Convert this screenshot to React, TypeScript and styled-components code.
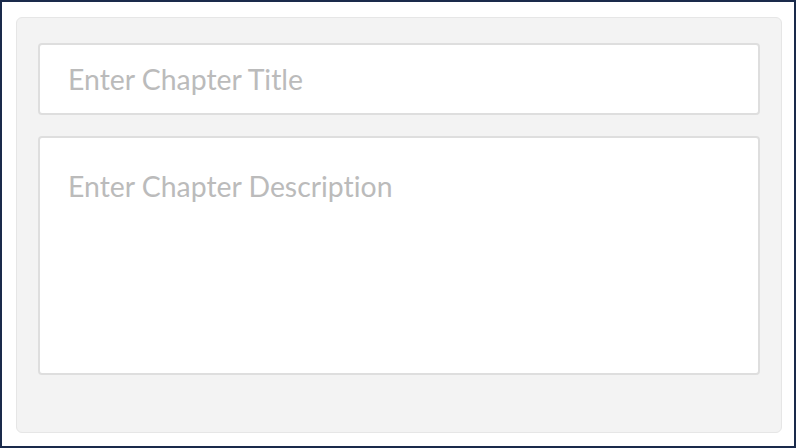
import React from "react";
import styled, { createGlobalStyle } from "styled-components";

const GlobalStyle = createGlobalStyle`
  html, body {
    margin: 0;
    padding: 0;
    background: #ffffff;
    font-family: Lato, "Open Sans", Arial, sans-serif;
  }
  * { box-sizing: border-box; }
`;

const Frame = styled.div`
  width: 796px;
  height: 448px;
  border: 2px solid #1a2a4b;
  padding: 15px 12px 13px 14px;
  background: #ffffff;
`;

const Panel = styled.form`
  height: 100%;
  background: #f3f3f3;
  border: 1px solid #e6e6e6;
  border-radius: 6px;
  padding: 25px 21px 57px 21px;
  display: flex;
  flex-direction: column;
  gap: 21px;
`;

const fieldBase = `
  width: 100%;
  background: #ffffff;
  border: 2px solid #dedede;
  border-radius: 4px;
  font-family: Lato, "Open Sans", Arial, sans-serif;
  font-size: 28.4px;
  font-variant-ligatures: none;
  font-feature-settings: "liga" 0, "clig" 0;
  color: #555555;
  padding: 0 28px;
  outline: none;
  &::placeholder {
    color: #bbbbbb;
    opacity: 1;
  }
`;

const TitleInput = styled.input`
  ${fieldBase}
  height: 72px;
  flex: none;
`;

const DescriptionInput = styled.textarea`
  ${fieldBase}
  flex: 1;
  resize: none;
  padding-top: 31px;
  line-height: 1.2;
`;

export default function App() {
  return (
    <>
      <GlobalStyle />
      <Frame>
        <Panel onSubmit={(e) => e.preventDefault()}>
          <TitleInput type="text" placeholder="Enter Chapter Title" />
          <DescriptionInput placeholder="Enter Chapter Description" />
        </Panel>
      </Frame>
    </>
  );
}
